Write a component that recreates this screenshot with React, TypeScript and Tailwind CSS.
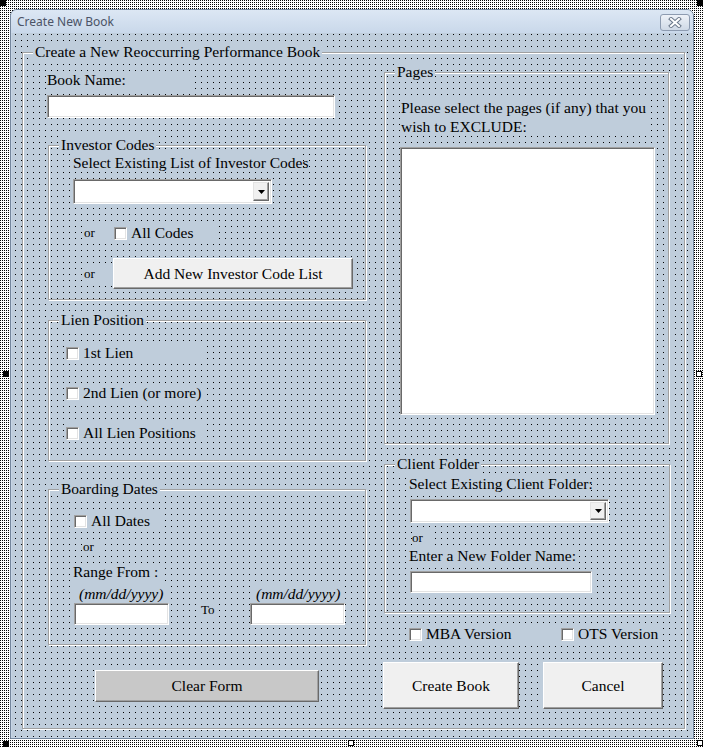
import React from "react";

const BG = "bg-[#bfcddb]";

function Frame({
  caption,
  className,
  children,
}: {
  caption: string;
  className: string;
  children?: React.ReactNode;
}) {
  return (
    <div
      className={
        "relative flex flex-col border border-[#a0a0a0] shadow-[inset_1px_1px_0_#fff,1px_1px_0_#fff] " +
        className
      }
    >
      <span className="absolute -top-[10px] left-[10px] px-[2px] bg-[#bfcddb] text-[15.5px] leading-[18px] whitespace-nowrap text-black">
        {caption}
      </span>
      {children}
    </div>
  );
}

function Check() {
  return (
    <span className="inline-block w-[13px] h-[13px] shrink-0 bg-white border border-t-[#a0a0a0] border-l-[#a0a0a0] border-r-white border-b-white shadow-[inset_1px_1px_0_#696969,inset_-1px_-1px_0_#e3e3e3]" />
  );
}

function TextBox({ className }: { className: string }) {
  return (
    <div
      className={
        "bg-white border border-t-[#a0a0a0] border-l-[#a0a0a0] border-r-white border-b-white shadow-[inset_1px_1px_0_#696969,inset_-1px_-1px_0_#e3e3e3] " +
        className
      }
    />
  );
}

function Combo({ className }: { className: string }) {
  return (
    <div
      className={
        "flex justify-end p-[2px] bg-white border border-t-[#a0a0a0] border-l-[#a0a0a0] border-r-white border-b-white shadow-[inset_1px_1px_0_#696969,inset_-1px_-1px_0_#e3e3e3] " +
        className
      }
    >
      <div className="w-[16px] h-full flex items-center justify-center bg-[#f0f0f0] border border-t-[#e3e3e3] border-l-[#e3e3e3] border-r-[#696969] border-b-[#696969] shadow-[inset_-1px_-1px_0_#a0a0a0]">
        <svg width="7" height="4" viewBox="0 0 7 4">
          <path d="M0 0H7L3.5 4Z" fill="#000" />
        </svg>
      </div>
    </div>
  );
}

function Button({
  label,
  className,
}: {
  label: string;
  className: string;
}) {
  return (
    <div
      className={
        "flex items-center justify-center text-[15.5px] leading-[18px] text-black border border-t-white border-l-white border-r-[#696969] border-b-[#696969] shadow-[inset_-1px_-1px_0_#a0a0a0] " +
        className
      }
    >
      {label}
    </div>
  );
}

function Label({
  children,
  className,
}: {
  children: React.ReactNode;
  className: string;
}) {
  return (
    <div
      className={
        "bg-[#bfcddb] text-[15.5px] leading-[18px] h-[18px] whitespace-nowrap text-black " +
        className
      }
    >
      {children}
    </div>
  );
}

function Small({
  children,
  className,
}: {
  children: React.ReactNode;
  className: string;
}) {
  return (
    <div
      className={
        "bg-[#bfcddb] text-[13px] leading-[16px] h-[16px] whitespace-nowrap text-black " +
        className
      }
    >
      {children}
    </div>
  );
}

function CheckRow({ label, className }: { label: string; className: string }) {
  return (
    <div
      className={
        "flex items-center gap-[4px] bg-[#bfcddb] h-[18px] text-[15.5px] leading-[18px] whitespace-nowrap text-black " +
        className
      }
    >
      <Check />
      <span>{label}</span>
    </div>
  );
}

function Handle({ className, white }: { className: string; white?: boolean }) {
  return (
    <div
      className={
        "absolute w-[6px] h-[6px] border border-black " +
        (white ? "bg-white " : "bg-black ") +
        className
      }
    />
  );
}

export default function App() {
  return (
    <div className="relative w-[704px] h-[747px] overflow-hidden bg-white bg-[image:linear-gradient(to_bottom,transparent_1px,#fff_1px),linear-gradient(to_right,#000_1px,transparent_1px)] bg-[length:2px_2px] pl-[10px] pt-[9px] font-['Liberation_Serif',serif]">
      {/* window */}
      <div className="w-[684px] h-[730px] flex flex-col border border-[#74869c] rounded-t-[7px] bg-[#c6d5e6] overflow-hidden">
        {/* title bar */}
        <div className="h-[23px] shrink-0 flex items-center justify-between pl-[6px] pr-[3px] bg-linear-to-b from-[#dce7f4] to-[#c9d8ea]">
          <span className="font-['Noto_Sans',sans-serif] text-[12px] text-[#4b5366] leading-none">
            Create New Book
          </span>
          <div className="w-[30px] h-[17px] mt-[2px] flex items-center justify-center rounded-[3px] border border-[#8d9bb0] bg-linear-to-b from-[#eef2f8] to-[#cfd9e6]">
            <svg width="16" height="11" viewBox="0 0 16 11">
              <path d="M4 2L12 9M12 2L4 9" stroke="#6d7a8c" strokeWidth="4" strokeLinecap="square" />
              <path d="M4 2L12 9M12 2L4 9" stroke="#ffffff" strokeWidth="2" strokeLinecap="square" />
            </svg>
          </div>
        </div>
        {/* client area */}
        <div className={"flex-1 mx-[1px] mb-[1px] pl-[10px] pt-[19px] bg-[image:linear-gradient(to_bottom,transparent_1px,#bfcddb_1px),linear-gradient(to_right,#000_1px,transparent_1px)] bg-[length:6px_6px] bg-[position:3px_1px] " + BG}>
          <Frame
            caption="Create a New Reoccurring Performance Book"
            className="w-[663px] h-[677px] !flex-row"
          >
            {/* left column */}
            <div className="ml-[24px] w-[320px] flex flex-col">
              <Label className="mt-[18px] w-[145px]">Book Name:</Label>
              <TextBox className="mt-[6px] w-[288px] h-[23px]" />

              <Frame caption="Investor Codes" className="mt-[27px] ml-[1px] w-[318px] h-[155px]">
                <Label className="mt-[8px] ml-[24px] w-[230px]">
                  Select Existing List of Investor Codes
                </Label>
                <Combo className="mt-[7px] ml-[24px] w-[199px] h-[25px]" />
                <div className="mt-[20px] h-[18px] flex items-center">
                  <Small className="ml-[35px] w-[30px]">or</Small>
                  <CheckRow label="All Codes" className="w-[100px]" />
                </div>
                <div className="mt-[16px] h-[31px] flex items-center">
                  <Small className="ml-[35px] w-[29px]">or</Small>
                  <Button
                    label="Add New Investor Code List"
                    className="w-[240px] h-[31px] bg-[#f0f0f0]"
                  />
                </div>
              </Frame>

              <Frame caption="Lien Position" className="mt-[20px] ml-[1px] w-[318px] h-[141px]">
                <CheckRow label="1st Lien" className="mt-[23px] ml-[17px] w-[140px]" />
                <CheckRow label="2nd Lien (or more)" className="mt-[22px] ml-[17px] w-[140px]" />
                <CheckRow label="All Lien Positions" className="mt-[22px] ml-[17px] w-[140px]" />
              </Frame>

              <Frame caption="Boarding Dates" className="mt-[28px] ml-[1px] w-[318px] h-[156px]">
                <CheckRow label="All Dates" className="mt-[22px] ml-[25px] w-[90px]" />
                <Small className="mt-[9px] ml-[34px] w-[20px]">or</Small>
                <Label className="mt-[8px] ml-[24px] w-[90px]">Range From :</Label>
                <div className="mt-[4px] flex">
                  <div className="ml-[25px] w-[95px] flex flex-col">
                    <Label className="pl-[5px] italic">(mm/dd/yyyy)</Label>
                    <TextBox className="w-[95px] h-[22px]" />
                  </div>
                  <Small className="ml-[32px] self-end mb-[7px] w-[16px]">To</Small>
                  <div className="ml-[33px] w-[95px] flex flex-col">
                    <Label className="pl-[6px] italic">(mm/dd/yyyy)</Label>
                    <TextBox className="w-[95px] h-[22px]" />
                  </div>
                </div>
              </Frame>

              <Button
                label="Clear Form"
                className="mt-[25px] ml-[48px] w-[224px] h-[32px] bg-[#c8c8c8]"
              />
            </div>

            {/* right column */}
            <div className="ml-[17px] w-[286px] flex flex-col">
              <Frame caption="Pages" className="mt-[19px] w-[285px] h-[372px]">
                <div className="mt-[25px] ml-[16px] w-[245px] bg-[#bfcddb] text-[15.5px] leading-[19px] whitespace-nowrap text-black">
                  Please select the pages (if any) that you
                  <br />
                  wish to EXCLUDE:
                </div>
                <TextBox className="mt-[11px] ml-[15px] w-[255px] h-[268px]" />
              </Frame>

              <Frame caption="Client Folder" className="mt-[20px] w-[286px] h-[149px]">
                <Label className="mt-[10px] ml-[24px] w-[180px]">
                  Select Existing Client Folder:
                </Label>
                <Combo className="mt-[6px] ml-[25px] w-[199px] h-[24px]" />
                <Small className="mt-[7px] ml-[27px] w-[20px]">or</Small>
                <Label className="mt-[1px] ml-[24px] w-[170px]">
                  Enter a New Folder Name:
                </Label>
                <TextBox className="mt-[6px] ml-[25px] w-[182px] h-[22px]" />
              </Frame>

              <div className="mt-[12px] ml-[25px] flex items-center">
                <CheckRow label="MBA Version" className="w-[152px]" />
                <CheckRow label="OTS Version" className="w-[100px]" />
              </div>

              <div className="mt-[19px] flex">
                <Button
                  label="Create Book"
                  className="-ml-[1px] w-[136px] h-[47px] bg-[#f0f0f0]"
                />
                <Button
                  label="Cancel"
                  className="ml-[24px] w-[120px] h-[47px] bg-[#f0f0f0]"
                />
              </div>
            </div>
          </Frame>
        </div>
      </div>

      {/* selection handles */}
      <Handle className="left-[0px] top-[0px]" />
      <Handle className="left-[697px] top-[0px]" />
      <Handle className="left-[3px] top-[371px]" />
      <Handle className="left-[696px] top-[371px]" white />
      <Handle className="left-[3px] top-[741px]" />
      <Handle className="left-[348px] top-[740px]" white />
      <Handle className="left-[697px] top-[740px]" white />
    </div>
  );
}
